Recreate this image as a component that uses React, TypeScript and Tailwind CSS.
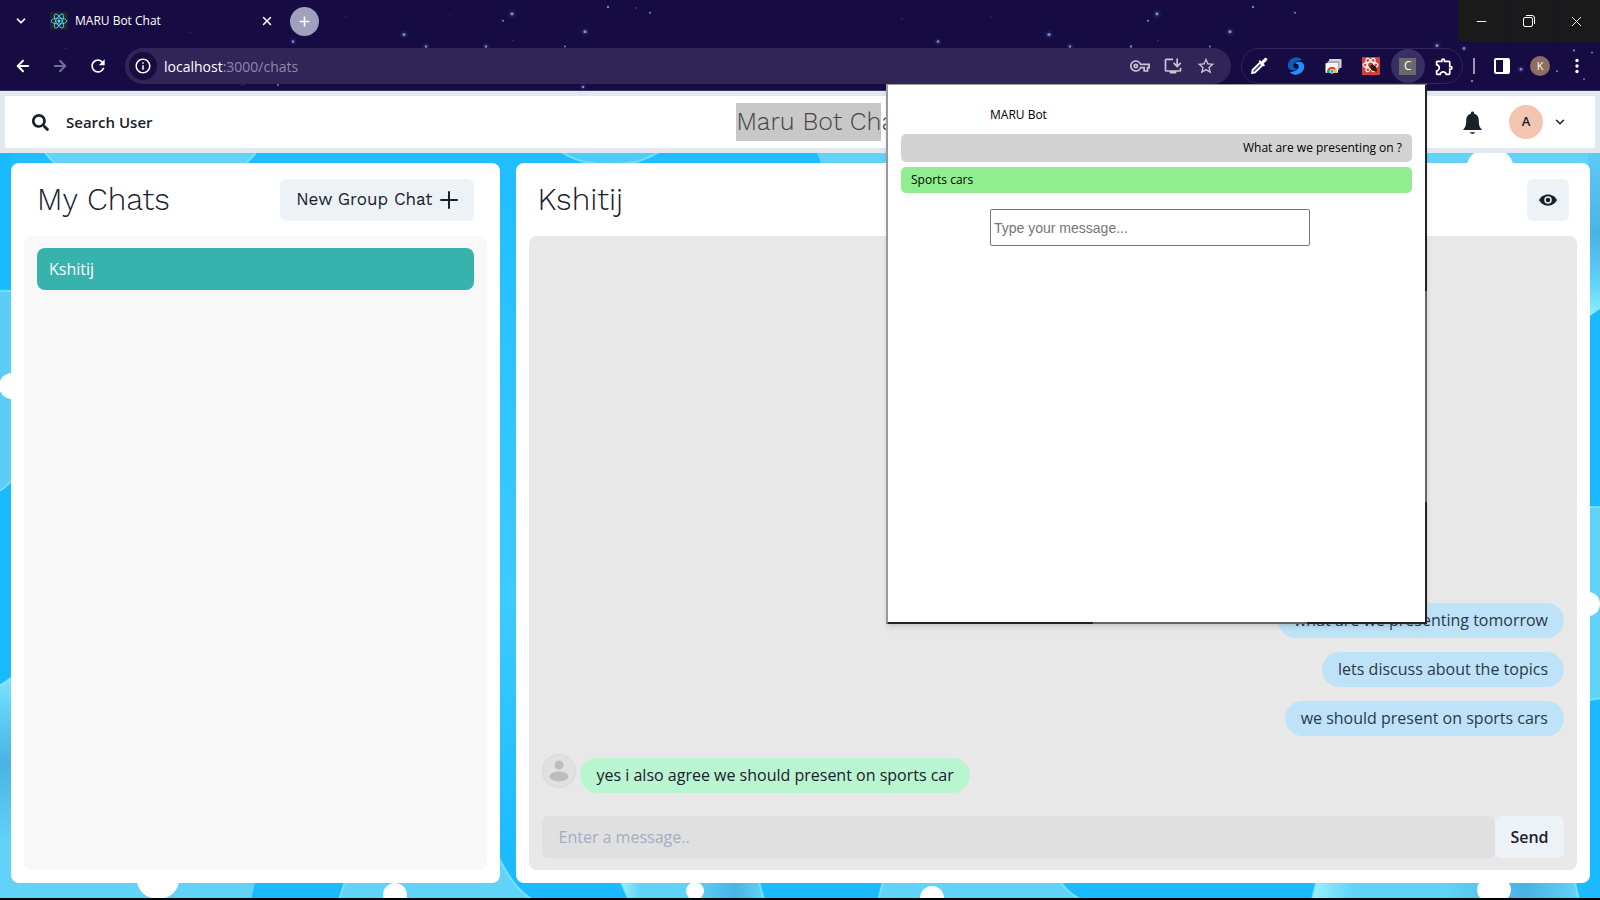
import { useState } from 'react';
import type { ReactNode } from 'react';
import {
  ArrowLeft,
  ArrowRight,
  ChevronDown,
  Minus,
  Plus,
  X,
} from 'lucide-react';
import {
  MdInfoOutline,
  MdOutlineExtension,
  MdOutlineInstallDesktop,
  MdOutlineVpnKey,
  MdRefresh,
  MdStarBorder,
} from 'react-icons/md';
import { FaSearch } from 'react-icons/fa';

interface Message {
  id: number;
  text: string;
}

const sent: Message[] = [
  { id: 1, text: 'what are we presenting tomorrow' },
  { id: 2, text: 'lets discuss about the topics' },
  { id: 3, text: 'we should present on sports cars' },
];

// x, y, radius
const stars = [
  [404, 35, 1.6], [426, 47, 1.3], [486, 47, 1.3], [512, 14, 1.7], [503, 21, 1],
  [293, 42, 1.4], [243, 84, 1.3], [278, 86, 1], [513, 41, 0.7], [585, 32, 1.7],
  [608, 7, 1.2], [636, 8, 0.9], [650, 13, 1], [565, 47, 1], [583, 88, 1.3],
  [938, 42, 1.4], [1049, 35, 1.7], [1070, 47, 1.3], [1157, 14, 1.7], [1148, 21, 1.1],
  [1230, 32, 1.7], [1253, 7, 1.2], [1131, 47, 1.2], [1158, 41, 0.7], [1210, 47, 1],
  [1295, 13, 1], [1437, 46, 1.6], [1464, 49, 1.4], [1574, 51, 1.1], [1592, 53, 1],
  [1521, 70, 1.5], [1557, 72, 1], [1472, 82, 1.2], [1584, 80, 1], [902, 19, 0.7],
  [190, 33, 0.6], [346, 17, 0.6], [450, 16, 0.6], [66, 49, 0.6], [991, 17, 0.6],
];

function StarField() {
  return (
    <svg
      className="absolute inset-0 h-full w-full"
      viewBox="0 0 1600 91"
      preserveAspectRatio="none"
      aria-hidden="true"
    >
      {stars.map(([x, y, r]) => (
        <g key={`${x}-${y}`}>
          {r > 1.2 && <circle cx={x} cy={y} r={r * 2.5} fill="#2b4a9c" opacity="0.22" />}
          <circle cx={x} cy={y} r={r} fill="#a4aee6" opacity={r < 1 ? 0.35 : 0.75} />
        </g>
      ))}
    </svg>
  );
}

function ReactLogo() {
  return (
    <svg className="h-[18px] w-[18px]" viewBox="0 0 24 24" aria-hidden="true">
      <rect width="24" height="24" rx="2" fill="#20232a" />
      <g fill="none" stroke="#61dafb" strokeWidth="1.1">
        <ellipse cx="12" cy="12" rx="10.5" ry="4" />
        <ellipse cx="12" cy="12" rx="10.5" ry="4" transform="rotate(60 12 12)" />
        <ellipse cx="12" cy="12" rx="10.5" ry="4" transform="rotate(120 12 12)" />
      </g>
      <circle cx="12" cy="12" r="2" fill="#61dafb" />
    </svg>
  );
}

function TabStrip() {
  return (
    <div className="relative flex h-[42px] items-center">
      <button aria-label="Search tabs" className="ml-3 flex w-[18px] justify-center">
        <ChevronDown size={14} strokeWidth={3} />
      </button>
      <div className="ml-5 flex w-[224px] items-center">
        <ReactLogo />
        <span className="ml-[7px] flex-1 text-[12px]">MARU Bot Chat</span>
        <button aria-label="Close tab">
          <X size={14} strokeWidth={2.5} />
        </button>
      </div>
      <button
        aria-label="New tab"
        className="ml-4 flex h-[29px] w-[29px] items-center justify-center rounded-full bg-[#a19fbe]"
      >
        <Plus size={15} strokeWidth={2.5} />
      </button>
      <div className="ml-auto flex h-full w-[142px] bg-[#1a1a1a]">
        <button aria-label="Minimize" className="flex flex-1 items-center justify-center">
          <Minus size={15} strokeWidth={1.5} />
        </button>
        <button
          aria-label="Restore"
          className="flex flex-1 items-center justify-center border-x border-[#19132c]"
        >
          <svg width="12" height="12" viewBox="0 0 12 12" fill="none" stroke="currentColor">
            <rect x="0.5" y="2.5" width="9" height="9" rx="1.5" />
            <path d="M3 .5h6a2.5 2.5 0 0 1 2.5 2.5v6" />
          </svg>
        </button>
        <button aria-label="Close" className="flex flex-1 items-center justify-center">
          <X size={17} strokeWidth={1.3} />
        </button>
      </div>
    </div>
  );
}

function ExtensionButton({ label, children }: { label: string; children: ReactNode }) {
  return (
    <button
      aria-label={label}
      className="flex h-[34px] w-[34px] shrink-0 items-center justify-center"
    >
      {children}
    </button>
  );
}

function Extensions() {
  return (
    <div className="ml-[10px] flex h-[36px] w-[222px] items-center justify-between rounded-full border border-[#30265a]">
      <ExtensionButton label="Color picker">
        <svg width="18" height="18" viewBox="0 0 18 18">
          <path d="M2 16.2 2.6 13 10 5.6l2.5 2.5-7.4 7.3z" fill="#3b4ea8" stroke="#fff" strokeWidth="1.8" strokeLinejoin="round" />
          <path d="m8.6 4.2 5.2 5.2 1.2-1.2-1.4-1.5 3.2-3.1a1.6 1.6 0 0 0-2.3-2.4l-3.1 3.2-1.6-1.5z" fill="#fff" />
        </svg>
      </ExtensionButton>
      <ExtensionButton label="Swirl">
        <svg width="18" height="18" viewBox="0 0 20 20">
          <path d="M17 3A9.5 9.5 0 0 0 1 11c1 3.5 5 4.3 8 3.5l2-2c-3 .4-4-1-4-3 0-3 4-5.5 10-6.5z" fill="#1259b5" />
          <path
            d="M17 3A9.5 9.5 0 0 0 1 11c1 3.5 5 4.3 8 3.5l2-2c-3 .4-4-1-4-3 0-3 4-5.5 10-6.5z"
            transform="rotate(180 10 10)"
            fill="#2190ff"
          />
        </svg>
      </ExtensionButton>
      <ExtensionButton label="Screenshots">
        <svg width="17" height="16" viewBox="0 0 17 16">
          <rect x="4" y="1" width="12.5" height="9" rx="1" fill="#d3d5da" />
          <rect x="2.5" y="3" width="12" height="9" rx="1" fill="#a9acb4" />
          <rect x=".5" y="5" width="12.5" height="10" rx="1" fill="#f4f4f4" />
          <path d="M2 15a4.8 4.8 0 0 1 2-5l2 5z" fill="#34a853" />
          <path d="M3 11a4.8 4.8 0 0 1 8 0l-4 2.5z" fill="#ea4335" />
          <path d="M11 11a5 5 0 0 1 .7 4H7l1-3z" fill="#fbbc05" />
          <circle cx="7" cy="13.4" r="1.9" fill="#4285f4" stroke="#fff" strokeWidth=".8" />
        </svg>
      </ExtensionButton>
      <ExtensionButton label="React Developer Tools">
        <svg width="18" height="18" viewBox="0 0 18 18">
          <rect width="18" height="18" rx="1" fill="#d5403b" />
          <g fill="none" stroke="#fff" strokeWidth="1.2">
            <ellipse cx="8.5" cy="8" rx="7.5" ry="3" />
            <ellipse cx="8.5" cy="8" rx="7.5" ry="3" transform="rotate(60 8.5 8)" />
            <ellipse cx="8.5" cy="8" rx="7.5" ry="3" transform="rotate(120 8.5 8)" />
          </g>
          <ellipse cx="11.5" cy="11" rx="2.5" ry="4" transform="rotate(-40 11.5 11)" fill="#3a1410" />
          <path d="m7 10 8 4M10 6.5l4.5 9M8 14l6-5" stroke="#3a1410" strokeWidth=".7" />
        </svg>
      </ExtensionButton>
      <button
        aria-label="MARU Bot"
        className="flex h-[34px] w-[34px] shrink-0 items-center justify-center rounded-full bg-[#3a2f62]"
      >
        <span className="flex h-[17px] w-[17px] items-center justify-center bg-[#696969] text-[12px] text-white">
          C
        </span>
      </button>
      <ExtensionButton label="Extensions">
        <MdOutlineExtension size={21} />
      </ExtensionButton>
    </div>
  );
}

function Toolbar() {
  return (
    <div className="relative flex h-[48px] items-center">
      <button aria-label="Back" className="ml-[14px]">
        <ArrowLeft size={18} strokeWidth={2.5} />
      </button>
      <button aria-label="Forward" className="ml-[19px] text-[#766f96]">
        <ArrowRight size={18} strokeWidth={2.5} />
      </button>
      <button aria-label="Reload" className="ml-[19px]">
        <MdRefresh size={20} />
      </button>
      <div className="ml-[17px] flex h-[36px] flex-1 items-center rounded-full bg-[#302556] pr-[15px] pl-1">
        <button
          aria-label="Site information"
          className="flex h-[28px] w-[28px] items-center justify-center rounded-full bg-[#170c40]"
        >
          <MdInfoOutline size={18} />
        </button>
        <a href="#chats" className="ml-[7px] flex-1 text-[14px] text-[#8f88ab]">
          <span className="text-white">localhost</span>:3000/chats
        </a>
        <div className="flex items-center gap-[13px] text-[#c9c5d6]">
          <button aria-label="Passwords">
            <MdOutlineVpnKey size={20} />
          </button>
          <button aria-label="Install app">
            <MdOutlineInstallDesktop size={20} />
          </button>
          <button aria-label="Bookmark">
            <MdStarBorder size={20} />
          </button>
        </div>
      </div>
      <Extensions />
      <div className="ml-[10px] h-4 w-[2px] bg-[#9a95b5]" />
      <button aria-label="Side panel" className="ml-[19px]">
        <svg width="16" height="16" viewBox="0 0 16 16">
          <rect x="1" y="1" width="14" height="14" rx="1" fill="none" stroke="#fff" strokeWidth="2" />
          <path d="M9 1h6v14H9z" fill="#fff" />
        </svg>
      </button>
      <button
        aria-label="Profile"
        className="ml-5 flex h-[20px] w-[20px] items-center justify-center rounded-full bg-[#8d6e63] text-[11px]"
      >
        K
      </button>
      <button aria-label="Menu" className="mr-[14px] ml-[18px]">
        <svg width="18" height="16" viewBox="0 0 18 16" fill="#fff">
          <circle cx="9" cy="2.5" r="1.7" />
          <circle cx="9" cy="8" r="1.7" />
          <circle cx="9" cy="13.5" r="1.7" />
        </svg>
      </button>
    </div>
  );
}

function Bubbles() {
  return (
    <svg
      className="absolute inset-0 h-full w-full"
      viewBox="0 153 1600 745"
      preserveAspectRatio="none"
      aria-hidden="true"
    >
      <defs>
        <linearGradient id="sky" x1="0" y1="0" x2="0" y2="1">
          <stop offset="0" stopColor="#1fbdff" />
          <stop offset="0.6" stopColor="#3dcbff" />
          <stop offset="0.9" stopColor="#1fbdff" />
          <stop offset="1" stopColor="#1bbaff" />
        </linearGradient>
        <linearGradient id="down" x1="0" y1="0" x2="0" y2="1">
          <stop offset="0" stopColor="#8ae6fa" />
          <stop offset="0.15" stopColor="#62d3f8" />
          <stop offset="0.4" stopColor="#4ab3e4" />
          <stop offset="0.75" stopColor="#62d3f8" />
        </linearGradient>
        <linearGradient id="corner" x1="0" y1="0" x2="0" y2="1">
          <stop offset="0" stopColor="#5ccbf4" />
          <stop offset="0.5" stopColor="#4ab3e4" />
          <stop offset="0.8" stopColor="#62d3f8" />
          <stop offset="1" stopColor="#8ff0fb" />
        </linearGradient>
        <linearGradient id="across" x1="0" y1="0" x2="1" y2="0">
          <stop offset="0" stopColor="#9bf0fb" />
          <stop offset="0.15" stopColor="#62d3f8" />
          <stop offset="0.5" stopColor="#62d3f8" />
          <stop offset="0.8" stopColor="#4ab3e4" />
          <stop offset="1" stopColor="#62d3f8" />
        </linearGradient>
      </defs>
      <rect y="153" width="1600" height="745" fill="url(#sky)" />
      <path d="M0 153h11v730H0zM1590 153h10v730h-10z" fill="#19baff" />
      <path d="M817 153 828 180H1600V153Z" fill="#62d3f8" />
      <path d="M1588 153V317L1600 309V153Z" fill="url(#corner)" />
      <g strokeWidth="2" stroke="#8aeafa" strokeOpacity="0.7">
        <path d="M44 151C74 200 226 200 257 151Z" fill="#62d3f8" />
        <path d="M560 151C585 169 635 169 660 151Z" fill="#4cccf8" />
        <path d="M-4 291Q6 290 20 292V470Q6 490 -4 492Z" fill="#5ccef6" />
        <path d="M-4 688 20 672V900H-4Z" fill="url(#down)" />
      </g>
      <path d="M0 870H258L251 900H0Z" fill="#62d3f8" />
      <g strokeWidth="2" stroke="#8aeafa" strokeOpacity="0.7">
        <path d="M346 878 339 900H534Q516 892 499 858L470 878Z" fill="#62d3f8" />
        <path d="M619 878 629 900H764L758 878Z" fill="url(#across)" />
        <path d="M884 878 878 900H1082Q1068 894 1058 878Z" fill="#62d3f8" />
        <path d="M1317 878 1312 900H1579L1574 878Z" fill="url(#across)" />
        <path d="M1588 507H1604V698L1588 700Z" fill="#62d3f8" />
      </g>
      <g fill="#fff">
        <ellipse cx="1490" cy="166" rx="23" ry="18" />
        <circle cx="12" cy="386" r="13" />
        <circle cx="1588" cy="604" r="12" />
        <ellipse cx="158" cy="880" rx="21" ry="19" />
        <circle cx="395" cy="895" r="12" />
        <circle cx="695" cy="891" r="9" />
        <circle cx="932" cy="898" r="12" />
        <ellipse cx="1494" cy="890" rx="17" ry="14" />
      </g>
    </svg>
  );
}

function AppHeader() {
  return (
    <header className="relative flex h-[62px] items-center justify-between border-[5px] border-[#e2e8f0] bg-white pr-7 pl-[27px]">
      <button className="flex items-center gap-[17px] text-[15px] font-semibold">
        <FaSearch size={17} />
        Search User
      </button>
      <h1 className="ml-7 font-['Work_Sans','Inter',sans-serif] text-[25px] leading-[38px] font-light text-[#444]">
        <mark className="inline-block bg-[#c8c8c8] text-inherit">Maru Bot Ch</mark>at
      </h1>
      <div className="flex items-center">
        <button aria-label="Notifications" className="mr-6">
          <svg width="25" height="25" viewBox="0 0 24 24" fill="#1a202c">
            <path d="M14.2 21.3a.36.36 0 0 1 .26.6c-.63.65-1.51 1.1-2.46 1.1-.95 0-1.84-.45-2.46-1.1a.36.36 0 0 1 .26-.6zM12 1.5c.84 0 1.53.65 1.53 1.5v.5c3 .7 4.5 3.1 4.5 6.2 0 4.8.8 6.7 2 8 .5.5.97 1 .97 1.6H3c0-.6.46-1.1.97-1.6 1.2-1.3 2-3.2 2-8 0-3.1 1.5-5.5 4.5-6.2V3c0-.85.69-1.5 1.53-1.5z" />
          </svg>
        </button>
        <button aria-label="Account" className="flex items-center gap-[10px]">
          <span className="flex h-[34px] w-[34px] items-center justify-center rounded-full bg-[#f2c5b1] text-[13px] font-semibold">
            A
          </span>
          <ChevronDown size={14} strokeWidth={2.5} />
        </button>
      </div>
    </header>
  );
}

function MyChats() {
  return (
    <section className="flex w-[31%] flex-col rounded-lg bg-white p-[13px]">
      <div className="flex h-[60px] items-center justify-between px-[13px] pb-3">
        <h2 className="font-['Work_Sans','Inter',sans-serif] text-[31px] font-light">My Chats</h2>
        <button className="flex h-[42px] items-center gap-2 rounded-md bg-[#edf2f7] px-4 font-['Work_Sans','Inter',sans-serif] text-[17px]">
          New Group Chat
          <svg width="18" height="18" viewBox="0 0 18 18" stroke="#1a202c" strokeWidth="2" strokeLinecap="round">
            <path d="M9 1v16M1 9h16" />
          </svg>
        </button>
      </div>
      <div className="flex-1 rounded-lg bg-[#f8f8f8] px-[13px] py-3">
        <button className="flex h-[42px] w-full items-center rounded-lg bg-[#38b2ac] px-3 text-[16px] text-white">
          Kshitij
        </button>
      </div>
    </section>
  );
}

function ChatBox() {
  const [message, setMessage] = useState('');

  return (
    <section className="flex flex-1 flex-col rounded-lg bg-white p-[13px]">
      <div className="flex h-[60px] items-center justify-between px-2 pb-3">
        <h2 className="font-['Work_Sans','Inter',sans-serif] text-[31px] font-light">Kshitij</h2>
        <button
          aria-label="View profile"
          className="flex h-[42px] w-[42px] items-center justify-center rounded-md bg-[#edf2f7]"
        >
          <svg width="18" height="18" viewBox="0 0 24 24">
            <path d="M12 4.5C6.5 4.5 2.2 7.5 0 12c2.2 4.5 6.5 7.5 12 7.5s9.8-3 12-7.5c-2.2-4.5-6.5-7.5-12-7.5z" fill="#1a202c" />
            <circle cx="12" cy="12" r="5" fill="#edf2f7" />
            <circle cx="12" cy="12" r="3" fill="#1a202c" />
          </svg>
        </button>
      </div>
      <div className="flex flex-1 flex-col justify-end rounded-lg bg-[#e8e8e8] px-[13px] py-3">
        <div className="flex flex-col items-end gap-[14px]">
          {sent.map((m) => (
            <p key={m.id} className="rounded-full bg-[#bee3f8] px-4 py-[5px] text-[16px] leading-[25px] text-[#2d3748]">
              {m.text}
            </p>
          ))}
        </div>
        <div className="mt-[18px] flex items-start gap-1">
          <svg className="h-[34px] w-[34px]" viewBox="0 0 34 34" role="img" aria-label="Kshitij">
            <circle cx="17" cy="17" r="16.5" fill="#e1e1e1" stroke="#d3d8d8" />
            <circle cx="17" cy="11" r="4.5" fill="#bdbdbd" />
            <ellipse cx="17" cy="22.5" rx="9.5" ry="5" fill="#bdbdbd" />
          </svg>
          <p className="mt-1 rounded-full bg-[#b9f5d0] px-4 py-[5px] text-[16px] leading-[25px]">
            yes i also agree we should present on sports car
          </p>
        </div>
        <form className="mt-[23px] flex" onSubmit={(e) => e.preventDefault()}>
          <input
            aria-label="Message"
            placeholder="Enter a message.."
            value={message}
            onChange={(e) => setMessage(e.target.value)}
            className="h-[42px] min-w-0 flex-1 rounded-md bg-[#e0e0e0] px-4 text-[16px] outline-none placeholder:text-[#a0aec0]"
          />
          <button className="h-[42px] w-[69px] rounded-md bg-[#edf2f7] text-[16px] font-semibold">
            Send
          </button>
        </form>
      </div>
    </section>
  );
}

function BotPopup() {
  const [question, setQuestion] = useState('');

  return (
    <aside className="absolute top-[84px] right-[173px] flex h-[540px] w-[541px] flex-col border-2 border-t border-[#666] border-t-[#999] border-l-[#999] bg-white px-[13px] text-[12px] text-black shadow-md">
      {/* Window outline is darker towards the corners */}
      <span className="absolute top-0 -right-[2px] h-[206px] w-[2px] bg-[#222]" />
      <span className="absolute -right-[2px] bottom-0 h-[120px] w-[2px] bg-[#222]" />
      <span className="absolute -bottom-[2px] left-0 h-[2px] w-[205px] bg-[#222]" />
      <span className="absolute -right-[2px] -bottom-[2px] h-[2px] w-[120px] bg-[#222]" />
      <h2 className="mt-[21px] ml-[89px] leading-[18px]">MARU Bot</h2>
      <p className="mt-[10px] rounded-[5px] bg-[#d3d3d3] px-[10px] text-right leading-[28px]">
        What are we presenting on ?
      </p>
      <p className="mt-[5px] rounded-[5px] bg-[#90ee90] px-[10px] leading-[26px]">Sports cars</p>
      <input
        aria-label="Ask MARU Bot"
        placeholder="Type your message..."
        value={question}
        onChange={(e) => setQuestion(e.target.value)}
        className="mt-4 ml-[89px] h-[37px] w-[320px] rounded-[2px] border border-[#767676] px-[3px] font-['Liberation_Sans',sans-serif] text-[14px] placeholder:text-[#757575]"
      />
    </aside>
  );
}

export default function App() {
  return (
    <div className="relative flex min-h-screen flex-col border-b-2 border-black font-['Segoe_UI','Open_Sans',sans-serif] text-[#1a202c]">
      <div className="relative border-b border-[#3c3264] bg-[#170b43] text-white">
        <StarField />
        <TabStrip />
        <Toolbar />
      </div>
      <AppHeader />
      <main className="relative flex flex-1 flex-col">
        <Bubbles />
        <div className="relative flex flex-1 gap-4 pt-[10px] pr-[10px] pb-[15px] pl-[11px]">
          <MyChats />
          <ChatBox />
        </div>
      </main>
      <BotPopup />
    </div>
  );
}
